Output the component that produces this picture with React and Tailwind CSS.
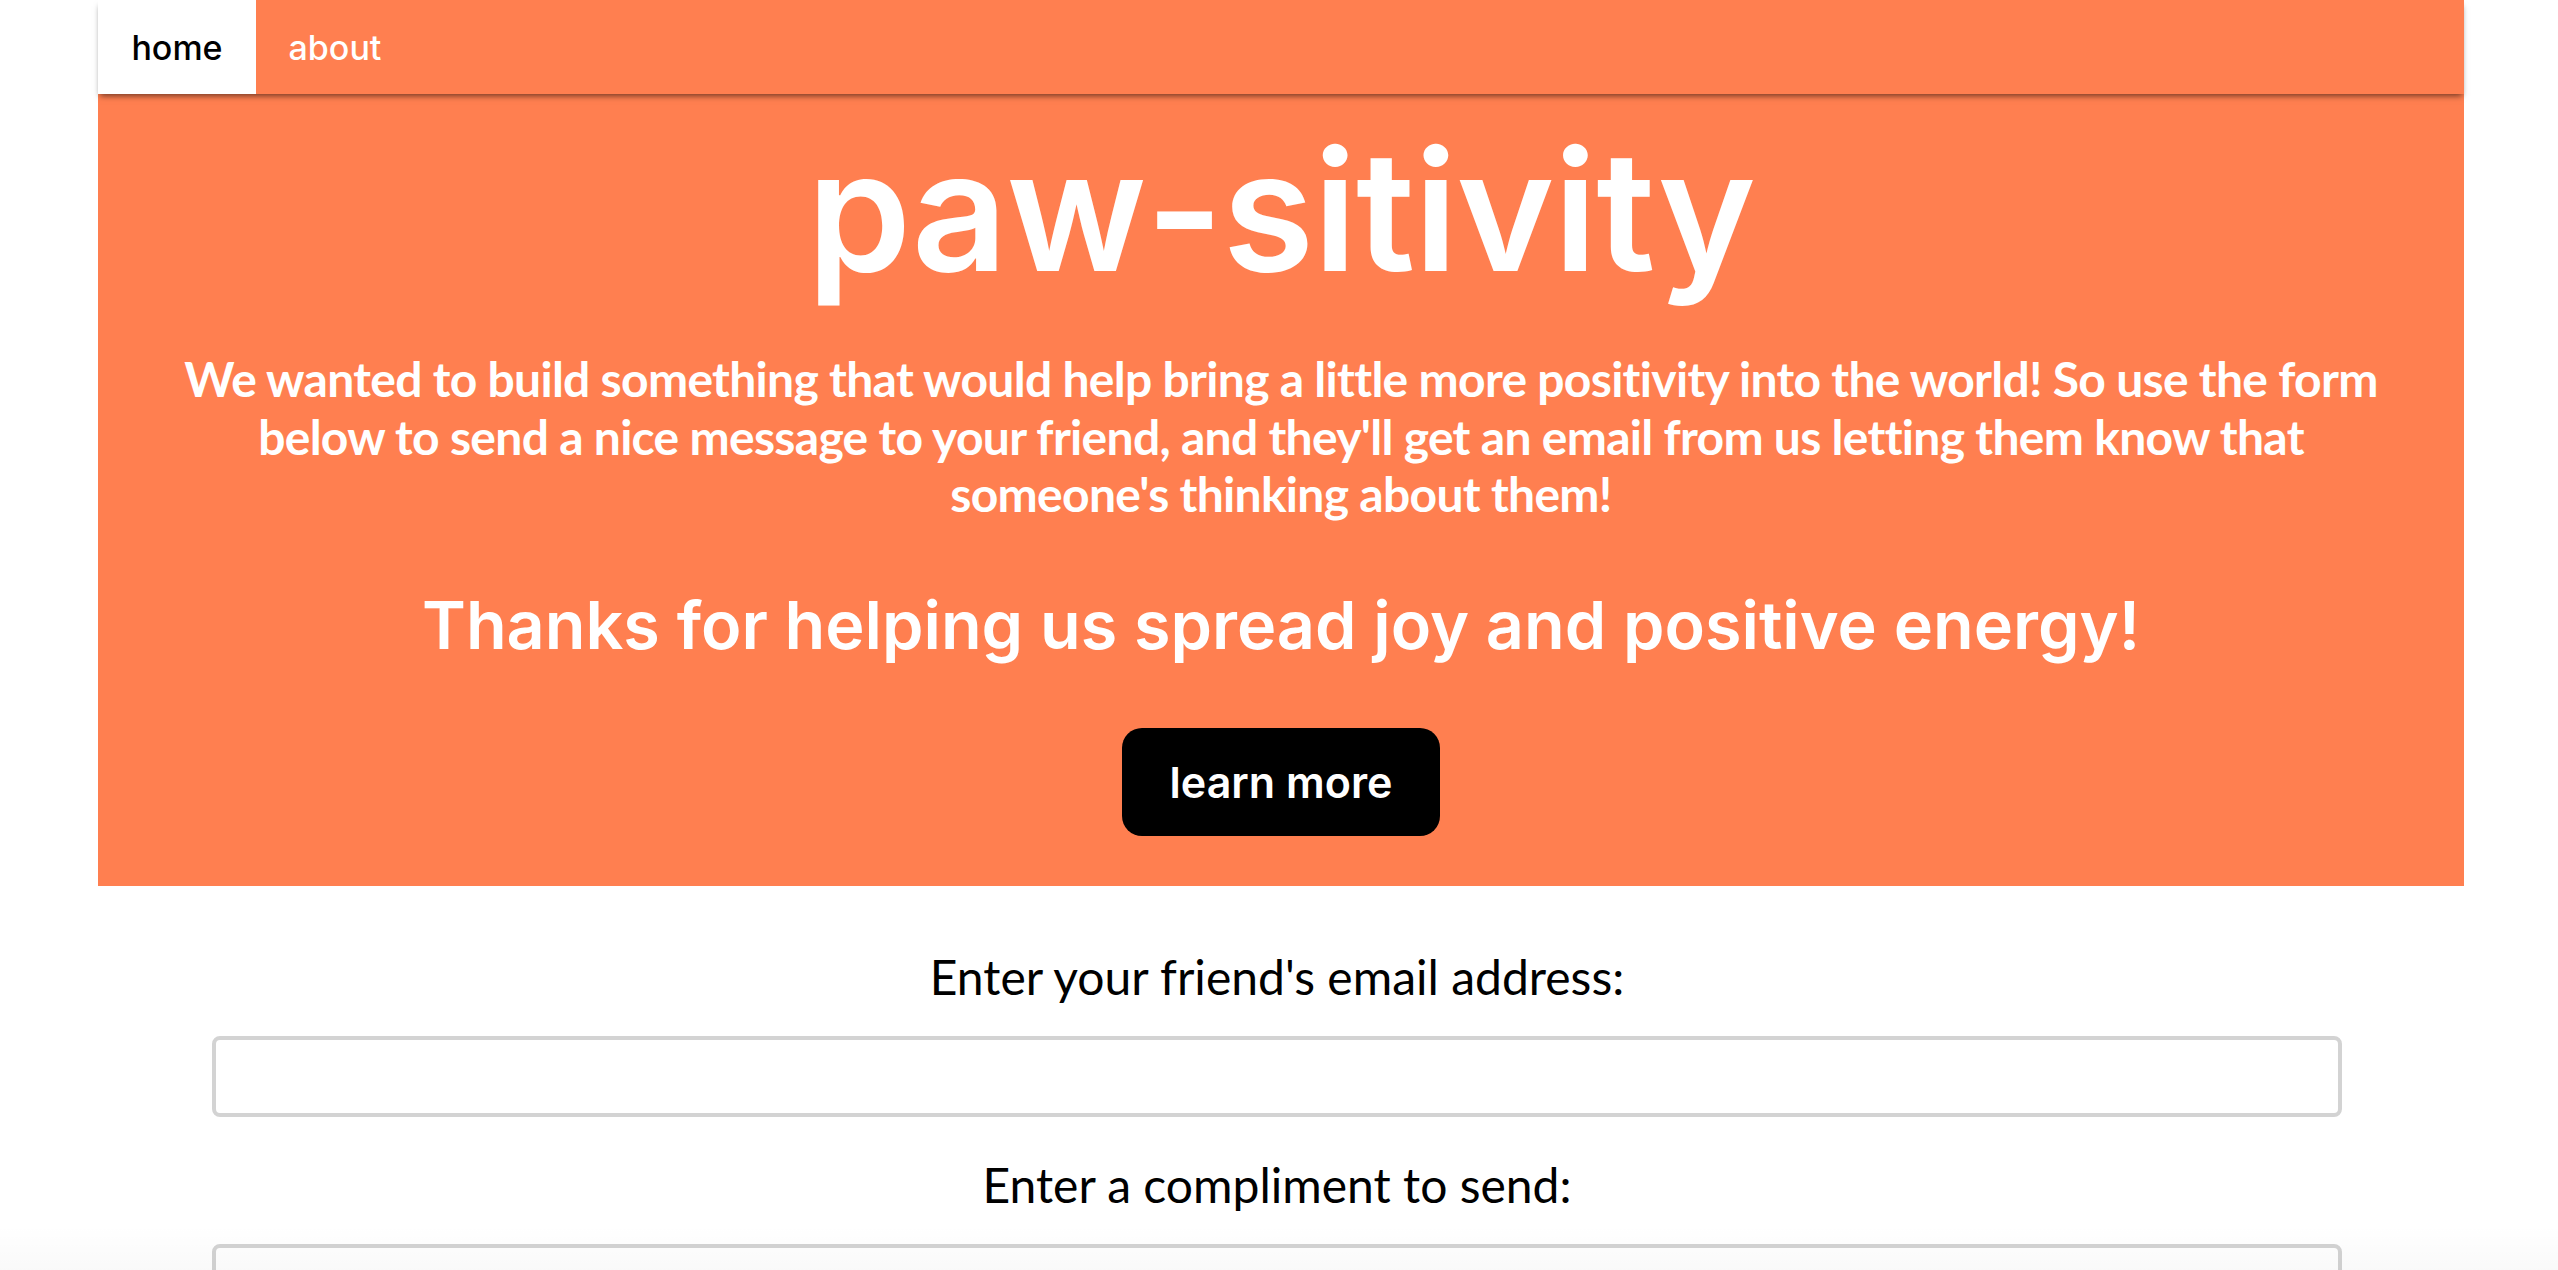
import React from 'react';

const heading = { fontFamily: 'Inter, "Liberation Sans", sans-serif' };

export default function App() {
    return (
        <div className="relative min-h-screen overflow-hidden bg-white" style={{ fontFamily: 'Lato, "Open Sans", sans-serif' }}>
            <div className="ml-[98px] w-[2366px]">
                {/* Nav */}
                <nav className="relative z-10 flex h-[94px] bg-[#ff7f50] shadow-[0_4px_6px_-2px_rgba(0,0,0,0.55)]" style={heading}>
                    <a href="#" className="flex w-[158px] items-center justify-center bg-white text-[34px] font-medium text-black">home</a>
                    <a href="#" className="flex w-[158px] items-center justify-center text-[34px] font-medium text-white">about</a>
                </nav>

                {/* Hero */}
                <section className="bg-[#ff7f50] px-[60px] pt-[33px] pb-[50px] text-center text-white">
                    <h1 className="text-[167px] leading-none font-semibold tracking-[-1px]" style={heading}>paw-sitivity</h1>
                    <p className="mt-[56px] text-[48px] leading-[1.2] font-bold tracking-[-0.7px]">
                        We wanted to build something that would help bring a little more positivity into the world! So use the form below to send a nice message to your friend, and they'll get an email from us letting them know that someone's thinking about them!
                    </p>
                    <h2 className="mt-[62px] text-[66.5px] leading-[80px] font-semibold" style={heading}>Thanks for helping us spread joy and positive energy!</h2>
                    <button className="mt-[63px] h-[108px] w-[318px] rounded-[20px] bg-black text-[43px] font-semibold text-white" style={heading}>learn more</button>
                </section>
            </div>

            {/* Form */}
            <form className="ml-[212px] w-[2130px] text-center text-black">
                <label className="mt-[62px] block text-[48px] leading-[1.2]">Enter your friend's email address:</label>
                <input type="email" className="mt-[31px] block h-[81px] w-full rounded-[8px] border-4 border-[#d3d3d3] bg-white px-4 text-[40px] outline-none" />
                <label className="mt-[39px] block text-[48px] leading-[1.2]">Enter a compliment to send:</label>
                <input type="text" className="mt-[30px] block h-[81px] w-full rounded-[8px] border-4 border-[#d3d3d3] bg-white px-4 text-[40px] outline-none" />
            </form>

            {/* window bottom fade */}
            <div className="pointer-events-none absolute right-0 bottom-0 left-0 h-[100px] bg-gradient-to-b from-transparent to-black/[0.05]" />
        </div>
    );
}
